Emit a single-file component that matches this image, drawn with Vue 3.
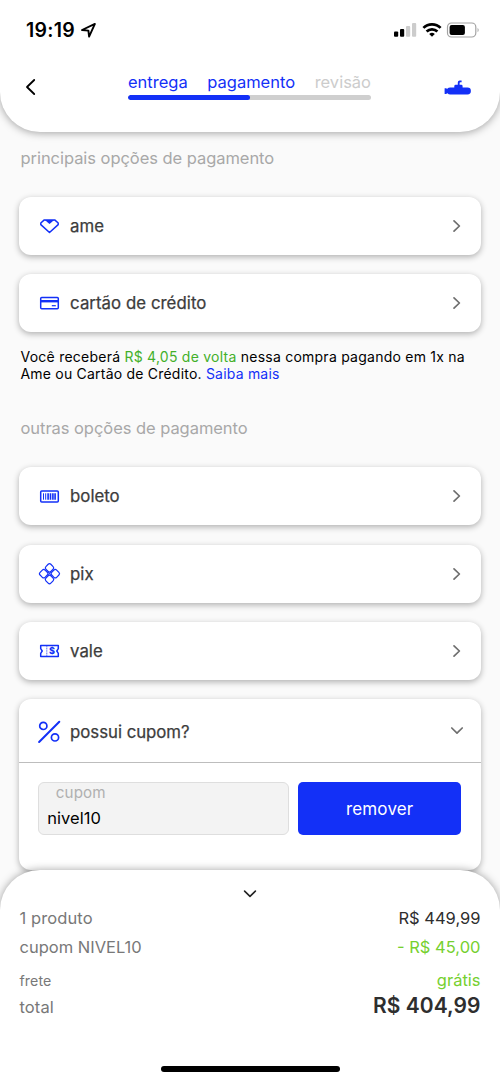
<script setup>
const mainOptions = [
  { id: 'ame', label: 'ame', cls: 't-ame' },
  { id: 'card', label: 'cartão de crédito', cls: 't-card' }
]
const otherOptions = [
  { id: 'boleto', label: 'boleto', cls: 't-boleto' },
  { id: 'pix', label: 'pix', cls: 't-pix' },
  { id: 'vale', label: 'vale', cls: 't-vale' }
]
const groups = [
  { id: 'main', title: 'principais opções de pagamento', options: mainOptions },
  { id: 'other', title: 'outras opções de pagamento', options: otherOptions }
]
</script>

<template>
  <div class="screen">
    <header class="header">
      <div class="status">
        <span class="time">19:19</span>
        <svg class="loc" width="18" height="18" viewBox="0 0 18 18">
          <path d="M2 8 14.9 1.9 9.1 14.6 8.4 8.6Z" fill="none" stroke="#000" stroke-width="1.9" stroke-linejoin="round" />
        </svg>
        <svg class="indicators" width="90" height="18" viewBox="0 0 90 18">
          <rect x="1" y="9.4" width="4.2" height="5.4" rx="1" />
          <rect x="7" y="7" width="4.2" height="7.8" rx="1" />
          <rect x="13" y="4" width="4.2" height="10.8" rx="1" fill="#cccccc" />
          <rect x="19" y="1" width="4.2" height="13.8" rx="1" fill="#cccccc" />
          <g fill="none" stroke="#000" stroke-width="2.7">
            <path d="M30.4 5.9a12.2 12.2 0 0 1 17.2 0" />
            <path d="M33.6 9.5a7.7 7.7 0 0 1 10.8 0" />
          </g>
          <path d="M36.2 12.1a4 4 0 0 1 5.6 0L39 14.7Z" />
          <rect x="54.5" y="1" width="28.3" height="14" rx="4" fill="none" stroke="#a3a3a3" stroke-width="1.2" />
          <rect x="56.6" y="3" width="15.3" height="10" rx="2" />
          <path d="M84.6 5.7q2 2.3 0 4.6Z" fill="#999" />
        </svg>
      </div>
      <div class="nav">
        <svg class="back" width="12" height="18" viewBox="0 0 12 18">
          <path d="M9.2 2 2 9l7.2 7" fill="none" stroke="#000" stroke-width="1.8" stroke-linecap="round" stroke-linejoin="round" />
        </svg>
        <div class="steps">
          <div class="labels">
            <span class="s1">entrega</span>
            <span class="s2">pagamento</span>
            <span class="s3">revisão</span>
          </div>
          <div class="track"><div class="progress"></div></div>
        </div>
        <svg class="sub" width="28" height="16" viewBox="0 0 28 16">
          <g fill="#1330f7">
            <rect x="2.8" y="7.6" width="24.1" height="6.9" rx="3.4" />
            <path d="M.6 8.3h1.6l2 1.5v2.6l-2 1.5H.6Z" />
            <path d="M10.3 8.6V6.2q0-1.4 1.4-1.4h2.1V2.6q0-2 2-2h1.8v1.7h-1.2q-.8 0-.8.8v1.7h1.6q1.4 0 1.4 1.4v2.4Z" />
          </g>
        </svg>
      </div>
    </header>

    <main class="content">
      <section v-for="g in groups" :key="g.id" :class="['group', g.id]">
        <h2 class="title"><span>{{ g.title }}</span></h2>
        <div class="cards">
          <div v-for="o in g.options" :key="o.id" class="card">
            <svg class="icon" width="24" height="24" viewBox="0 0 24 24" fill="none" stroke="#1330f7" stroke-width="1.5" stroke-linejoin="round">
              <template v-if="o.id === 'ame'">
                <path d="M6.3 5.9h10.4L20.2 9v1.6l-8.7 7.9-8.7-7.9V9Z" />
                <path d="M6.8 5.9h9.4L11.5 10Z" fill="#1330f7" stroke="none" />
              </template>
              <template v-else-if="o.id === 'card'">
                <rect x="2.7" y="6.5" width="17.6" height="11.2" rx="1" />
                <path d="M2.5 10.2h18" stroke-width="2.4" />
                <path d="M13.8 14.7h4" stroke-width="1.2" />
              </template>
              <template v-else-if="o.id === 'boleto'">
                <rect x="2.7" y="6.9" width="17.6" height="11.2" rx="1" />
                <path d="M5.5 9.3v6.4M7.7 9.3v6.4" stroke-width="1" />
                <path d="M10.1 9.3v6.4M12.5 9.3v6.4M14.9 9.3v6.4M17.1 9.3v6.4" stroke-width="1.6" />
              </template>
              <template v-else-if="o.id === 'pix'">
                <g stroke-width="1.2" transform="translate(-0.5 -0.3)">
                  <rect x="-3.5" y="-3.5" width="7" height="7" rx="1.9" transform="translate(12 6.2) rotate(45)" />
                  <rect x="-3.5" y="-3.5" width="7" height="7" rx="1.9" transform="translate(17.8 12) rotate(45)" />
                  <rect x="-3.5" y="-3.5" width="7" height="7" rx="1.9" transform="translate(12 17.8) rotate(45)" />
                  <rect x="-3.5" y="-3.5" width="7" height="7" rx="1.9" transform="translate(6.2 12) rotate(45)" />
                  <path d="m10.2 10.2 3.6 3.6M13.8 10.2l-3.6 3.6" stroke-width="0.9" />
                </g>
              </template>
              <template v-else>
                <path d="M2.7 6.6h17.6v3.1L18.8 12l1.5 2.3v3.1H2.7v-3.1L4.2 12 2.7 9.7Z" />
                <path d="M8.8 7.2v9.6" stroke-width=".7" stroke-dasharray="1.2 .5" />
                <text class="dollar" x="14.1" y="15" text-anchor="middle">$</text>
              </template>
            </svg>
            <span :class="['label', o.cls]">{{ o.label }}</span>
            <svg class="chev" width="12" height="16" viewBox="0 0 12 16">
              <path d="m3 2.8 5.4 5.2L3 13.2" fill="none" stroke="#6e6e6e" stroke-width="1.7" stroke-linecap="round" stroke-linejoin="round" />
            </svg>
          </div>
        </div>
        <p v-if="g.id === 'main'" class="note">
          <span class="n1">Você receberá <span class="green">R$ 4,05 de volta</span> nessa compra pagando em 1x na</span><br />
          <span class="n2">Ame ou Cartão de Crédito. <a>Saiba mais</a></span>
        </p>
      </section>

      <section class="coupon">
        <div class="coupon-head">
          <svg class="icon" width="24" height="24" viewBox="0 0 24 24" fill="none" stroke="#1330f7" stroke-width="1.7" stroke-linecap="round">
            <path d="M2.1 22 22.3 1.8" stroke-width="2" />
            <circle cx="6.3" cy="5.9" r="3.6" />
            <circle cx="18" cy="17.4" r="3.6" />
          </svg>
          <span class="label t-coupon">possui cupom?</span>
          <svg class="chev down" width="16" height="12" viewBox="0 0 16 12">
            <path d="m2.8 3 5.2 5.2L13.2 3" fill="none" stroke="#6e6e6e" stroke-width="1.7" stroke-linecap="round" stroke-linejoin="round" />
          </svg>
        </div>
        <div class="coupon-form">
          <div class="field">
            <span class="field-label">cupom</span>
            <span class="field-value">nivel10</span>
          </div>
          <button class="remove">remover</button>
        </div>
      </section>
    </main>

    <footer class="summary">
      <svg class="collapse" width="16" height="12" viewBox="0 0 16 12">
        <path d="m2.6 3.1 5.4 5.2 5.4-5.2" fill="none" stroke="#222" stroke-width="1.6" stroke-linecap="round" stroke-linejoin="round" />
      </svg>
      <div class="row r1"><span>1 produto</span><b>R$ 449,99</b></div>
      <div class="row r2"><span>cupom NIVEL10</span><b>- R$ 45,00</b></div>
      <div class="row r3"><span>frete</span><b>grátis</b></div>
      <div class="row r4"><span>total</span><b>R$ 404,99</b></div>
      <div class="home"></div>
    </footer>
  </div>
</template>

<style>
body {
  margin: 0;
}
</style>

<style scoped>
.screen {
  width: 500px;
  height: 1082px;
  overflow: hidden;
  background: #fafafa;
  font-family: Inter, "Liberation Sans", sans-serif;
  display: flex;
  flex-direction: column;
}
.header {
  box-sizing: border-box;
  height: 132px;
  flex: none;
  background: #fff;
  border-radius: 0 0 40px 40px;
  box-shadow: 0 1px 8px rgba(0, 0, 0, 0.36);
}
.status {
  height: 60px;
  display: flex;
  align-items: center;
  padding: 0 17px 0 26px;
}
.time {
  width: 49px;
  font-size: 19.5px;
  font-weight: 600;
  letter-spacing: 0.25px;
}
.loc {
  margin-left: 5px;
  margin-top: 1px;
}
.indicators {
  margin-left: auto;
  margin-top: 1px;
}
.nav {
  display: flex;
  height: 72px;
}
.back {
  margin: 18px 0 0 24.5px;
}
.steps {
  width: 243px;
  margin: 11px 0 0 91.5px;
}
.labels {
  display: flex;
  justify-content: space-between;
  font-size: 16.5px;
  line-height: 22px;
  color: #1330f7;
}
.s3 {
  color: #cccccc;
}
.track {
  height: 5px;
  margin-top: 1.5px;
  background: #cfcfcf;
  border-radius: 3px;
  overflow: hidden;
}
.progress {
  width: 50%;
  height: 100%;
  border-radius: 3px;
  background: #1330f7;
}
.sub {
  margin: 20px 0 0 73px;
}
.content {
  flex: none;
  height: 738px;
  padding: 0 19px;
}
.title {
  margin: 0;
  padding: 0 1.5px;
  font-size: 16.5px;
  font-weight: 400;
  line-height: 24px;
  letter-spacing: -0.05px;
  color: #a8a8a8;
}
.main {
  height: 270px;
}
.main .title {
  padding-top: 13.5px;
}
.other .title {
  padding-top: 14px;
}
.main .cards {
  margin-top: 27.3px;
}
.other .cards {
  margin-top: 27.4px;
}
.cards {
  display: flex;
  flex-direction: column;
  gap: 19.3px;
}
.card,
.coupon {
  box-sizing: border-box;
  width: 461.5px;
  margin-left: 0.2px;
  border-radius: 12px;
  background: #fff;
  box-shadow: 0 2px 6px rgba(0, 0, 0, 0.3);
}
.card {
  height: 58px;
  display: flex;
  align-items: center;
  padding: 0 17.8px 0 18.3px;
}
.icon {
  flex: none;
}
.card .icon {
  margin: 0 -0.5px 0 0.5px;
}
.label {
  margin-left: 8.6px;
  font-size: 16.8px;
  line-height: 24px;
  color: #3c3c3c;
  font-weight: 400;
  -webkit-text-stroke: 0.25px #3c3c3c;
}
.t-card {
  letter-spacing: 0.05px;
}
.dollar {
  font-size: 9px;
  font-weight: 800;
  fill: #1330f7;
  stroke: none;
}
.chev {
  margin-left: auto;
}
.note {
  margin: 15.5px 0 0 1.5px;
  font-size: 14px;
  line-height: 17px;
  letter-spacing: 0.24px;
  color: #000;
  white-space: nowrap;
}
.n2 {
  letter-spacing: 0.21px;
}
.green {
  color: #43b02a;
}
.note a {
  color: #1330f7;
}
.coupon {
  height: 171px;
  margin-top: 19.1px;
}
.coupon-head {
  box-sizing: border-box;
  height: 64px;
  display: flex;
  align-items: center;
  padding: 2px 16px 0 18.3px;
  border-bottom: 1px solid #bdbdbd;
}
.t-coupon {
  letter-spacing: -0.03px;
}
.down {
  position: relative;
  top: -1px;
}
.coupon-form {
  display: flex;
  gap: 9px;
  padding: 19px 19.5px 0 19px;
}
.field {
  box-sizing: border-box;
  width: 251px;
  height: 52.5px;
  background: #f3f3f3;
  border: 1px solid #dedede;
  border-radius: 6px;
  padding-left: 8px;
  display: flex;
  flex-direction: column;
  align-items: flex-start;
}
.field-label {
  margin-left: 8.5px;
  font-size: 15.2px;
  line-height: 20px;
  letter-spacing: 0.15px;
  color: #b0b0b0;
}
.field-value {
  font-size: 16.5px;
  line-height: 20px;
  margin-top: 5px;
  letter-spacing: 0.05px;
  color: #000;
}
.remove {
  flex: 1;
  height: 52.5px;
  padding: 1.5px 0 0;
  border: 0;
  border-radius: 5px;
  background: #1330f7;
  color: #fff;
  font: 400 17px Inter, "Liberation Sans", sans-serif;
  letter-spacing: 0.15px;
}
.summary {
  position: relative;
  box-sizing: border-box;
  flex: none;
  height: 212px;
  background: #fff;
  border-radius: 40px 40px 0 0;
  box-shadow: 0 0 9px rgba(0, 0, 0, 0.36);
  padding: 17.5px 19.5px 0;
  display: flex;
  flex-direction: column;
}
.collapse {
  align-self: center;
}
.row {
  display: flex;
  justify-content: space-between;
  align-items: center;
  height: 29px;
  font-size: 16.5px;
  color: #787878;
}
.row b {
  font-weight: 400;
  color: #2e2e2e;
}
.r1 {
  margin-top: 4px;
}
.r1 span {
  letter-spacing: 0.1px;
}
.r2 b,
.r3 b {
  color: #76d02f;
}
.r3 {
  margin-top: 4px;
}
.r3 span {
  font-size: 14.2px;
  letter-spacing: 0.1px;
}
.r4 {
  height: 26px;
  margin-top: -2px;
}
.r4 span {
  position: relative;
  top: 1px;
  letter-spacing: 0.1px;
}
.r4 b {
  font-size: 21px;
  font-weight: 600;
  letter-spacing: 0.05px;
}
.home {
  width: 179px;
  height: 6px;
  border-radius: 3px;
  background: #000;
  align-self: center;
  margin-top: 47px;
}
</style>
